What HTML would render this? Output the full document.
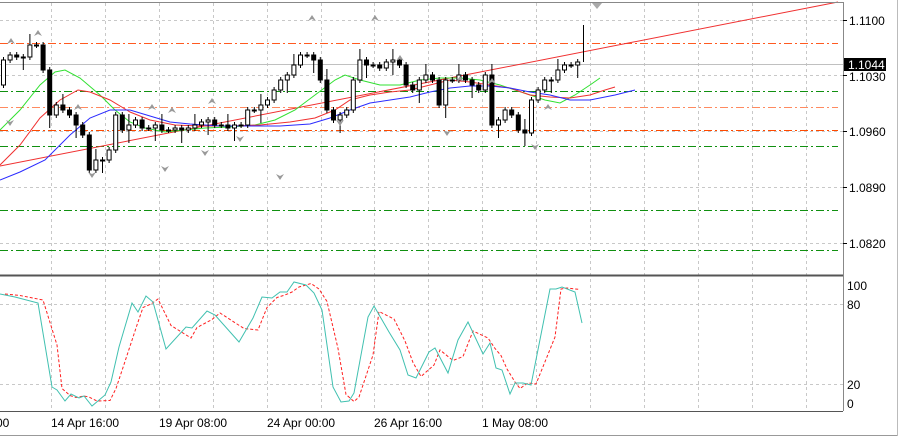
<!DOCTYPE html>
<html><head><meta charset="utf-8"><style>
body{margin:0;width:900px;height:440px;background:#fff;overflow:hidden;font-family:"Liberation Sans",sans-serif}
svg{position:absolute;left:0;top:0}
text{font-family:"Liberation Sans",sans-serif;font-size:12px;fill:#000}
</style></head><body>
<svg width="900" height="440" id="s">
<g stroke="#c8c8c8" stroke-dasharray="3,3" stroke-width="1">
<line x1="0" y1="20.5" x2="843" y2="20.5"/><line x1="0" y1="75.5" x2="843" y2="75.5"/><line x1="0" y1="131.5" x2="843" y2="131.5"/><line x1="0" y1="187.5" x2="843" y2="187.5"/><line x1="0" y1="243.5" x2="843" y2="243.5"/>
<line x1="0" y1="304.5" x2="843" y2="304.5"/><line x1="0" y1="384.5" x2="843" y2="384.5"/>
</g>
<g id="vg" stroke="#c8c8c8" stroke-dasharray="3,3"></g>
<line x1="0" y1="64.5" x2="843" y2="64.5" stroke="#c0c0c0"/>
<g stroke-width="1" stroke-dasharray="8,3,2,3" shape-rendering="crispEdges">
<line x1="0" y1="43.5" x2="838" y2="43.5" stroke="#ff5a20"/>
<line x1="0" y1="91.5" x2="838" y2="91.5" stroke="#109010"/>
<line x1="0" y1="107.5" x2="838" y2="107.5" stroke="#ff8a60"/>
<line x1="0" y1="130.5" x2="838" y2="130.5" stroke="#ff4a00"/>
<line x1="0" y1="146.5" x2="838" y2="146.5" stroke="#109010"/>
<line x1="0" y1="210.5" x2="838" y2="210.5" stroke="#109010"/>
<line x1="0" y1="250.5" x2="838" y2="250.5" stroke="#109010"/>
</g>
<line x1="0" y1="166" x2="838" y2="2" stroke="#f03030"/>
<polyline fill="none" stroke="#30e030" points="0,130 20,110 40,85 55,72 65,70 80,78 100,95 115,110 130,122 145,128 165,132 185,130 205,128 230,127 255,125 275,120 295,110 315,95 335,80 345,75 360,80 380,85 400,85 420,80 440,78 460,78 480,80 500,85 515,90 530,95 545,100 560,103 575,95 590,85 600,78"/>
<polyline fill="none" stroke="#f03030" points="0,165 20,145 40,118 60,100 78,90 90,92 110,100 130,112 150,120 175,125 200,126 230,126 260,125 290,122 315,118 335,110 350,100 370,95 390,92 410,90 430,85 450,80 470,82 490,85 510,88 530,95 550,97 570,98 590,95 605,90 615,87"/>
<polyline fill="none" stroke="#2b2bff" points="0,180 20,172 45,160 70,135 90,118 110,110 130,110 150,116 170,122 190,124 220,126 250,126 280,126 310,124 330,118 350,110 370,103 390,100 410,97 430,92 450,88 470,86 490,86 510,88 530,92 550,95 570,100 590,100 615,95 635,90"/>
<g id="cd"></g>
<g id="ar"></g>
<polyline id="sr" fill="none" stroke="#ff2020" stroke-dasharray="3,2"/>
<polyline id="sc" fill="none" stroke="#40c0b0"/>
<g stroke="#888" stroke-width="1" fill="none">
<line x1="0" y1="2.5" x2="843" y2="2.5" stroke="#888"/>
<line x1="843.5" y1="2" x2="843.5" y2="411"/>
<line x1="0" y1="275.5" x2="843" y2="275.5" stroke="#555" stroke-width="2"/>
<line x1="0" y1="411.5" x2="843" y2="411.5" stroke="#555"/>
<line x1="0" y1="435.5" x2="898" y2="435.5" stroke="#999"/>
<line x1="897.5" y1="0" x2="897.5" y2="436" stroke="#bbb"/>
</g>
<g stroke="#000"><line x1="843" y1="20.5" x2="847" y2="20.5"/><line x1="843" y1="75.5" x2="847" y2="75.5"/><line x1="843" y1="131.5" x2="847" y2="131.5"/><line x1="843" y1="187.5" x2="847" y2="187.5"/><line x1="843" y1="243.5" x2="847" y2="243.5"/></g>
<text x="849" y="25">1.1100</text>
<text x="849" y="81">1.1030</text>
<text x="849" y="136">1.0960</text>
<text x="849" y="192">1.0890</text>
<text x="849" y="248">1.0820</text>
<rect x="844" y="58" width="42" height="13" fill="#000"/>
<text x="848" y="69" style="fill:#fff">1.1044</text>
<text x="847" y="290">100</text><text x="847" y="309">80</text><text x="847" y="389">20</text><text x="847" y="408">0</text>
<text x="-4" y="427">00</text>
<text x="51" y="427">14 Apr 16:00</text>
<text x="159" y="427">19 Apr 08:00</text>
<text x="267" y="427">24 Apr 00:00</text>
<text x="374" y="427">26 Apr 16:00</text>
<text x="482" y="427">1 May 08:00</text>
</svg>
<script>
var NS="http://www.w3.org/2000/svg";
function el(t,a,p){var e=document.createElementNS(NS,t);for(var k in a)e.setAttribute(k,a[k]);p.appendChild(e);return e;}
var vg=document.getElementById('vg');
for(var i=0;i<15;i++){var x=Math.round(51+i*53.9)+.5;el('line',{x1:x,y1:3,x2:x,y2:411},vg);}
var cl=[85,60,55,57,57,45,45,70,115,105,110,115,125,135,170,160,160,150,115,130,125,120,128,128,125,130,130,128,130,128,125,122,120,125,125,128,125,125,110,110,105,100,90,80,75,65,55,55,60,80,110,120,115,110,80,60,65,65,68,62,60,65,85,90,80,75,80,105,80,80,75,80,85,90,75,125,120,110,115,130,133,100,90,80,80,70,65,65,62];
var cd=document.getElementById('cd');
for(var i=1;i<cl.length;i++){var x=3+(i-1)*6.6;var o=cl[i-1],c=cl[i];var t=Math.min(o,c),b=Math.max(o,c);
var h=t-3-(i%5==0?8:0),l=b+3+(i%4==0?10:0);
el('line',{x1:x+.5,y1:h,x2:x+.5,y2:l,stroke:'#000'},cd);
el('rect',{x:x-1.5,y:t,width:4,height:Math.max(1,b-t),fill:c<o?'#fff':'#000',stroke:'#000','stroke-width':1},cd);}
el('line',{x1:583.5,y1:25,x2:583.5,y2:62,stroke:'#000'},cd);
var ar=document.getElementById('ar');
[[11,38],[38,30],[78,104],[152,104],[172,107],[212,98],[312,15],[375,15],[400,55],[460,76],[492,78],[548,104],[102,170]].forEach(function(a){
 if(a[0]==102)return;
 el('path',{d:'M'+a[0]+' '+a[1]+' l-4 6 l4 -2 l4 2z',fill:'#999'},ar);});
[[92,178],[165,172],[205,156],[240,142],[340,126],[447,136],[535,150],[280,180],[10,126]].forEach(function(a){
 el('path',{d:'M'+a[0]+' '+a[1]+' l-4 -6 l4 2 l4 -2z',fill:'#999'},ar);});
el('path',{d:'M592 3 l10 0 l-5 6z',fill:'#aaa'},ar);
var p=[[0,294],[15,297],[38,303],[52,387],[57,390],[65,401],[71,394],[79,398],[84,396],[92,406],[105,395],[111,382],[119,347],[132,303],[138,312],[146,296],[153,302],[166,349],[186,327],[192,328],[207,311],[215,315],[239,342],[253,318],[262,297],[272,298],[280,292],[287,292],[294,282],[306,285],[314,293],[322,310],[333,387],[341,402],[349,401],[354,393],[368,317],[374,306],[389,332],[400,350],[408,375],[416,378],[429,352],[435,348],[448,373],[458,340],[468,322],[483,354],[490,343],[496,368],[502,370],[510,394],[515,383],[523,383],[531,385],[550,289],[556,289],[562,287],[575,292],[582,323]];
document.getElementById('sc').setAttribute('points',p.map(function(q){return q[0]+','+q[1]}).join(' '));
var r=[];for(var i=0;i<p.length-1;i++){var y=(p[i][1]+(p[i-1]||p[i])[1])/2;r.push((p[i][0]+5)+','+y);}
document.getElementById('sr').setAttribute('points',r.join(' '));
</script>
</body></html>
